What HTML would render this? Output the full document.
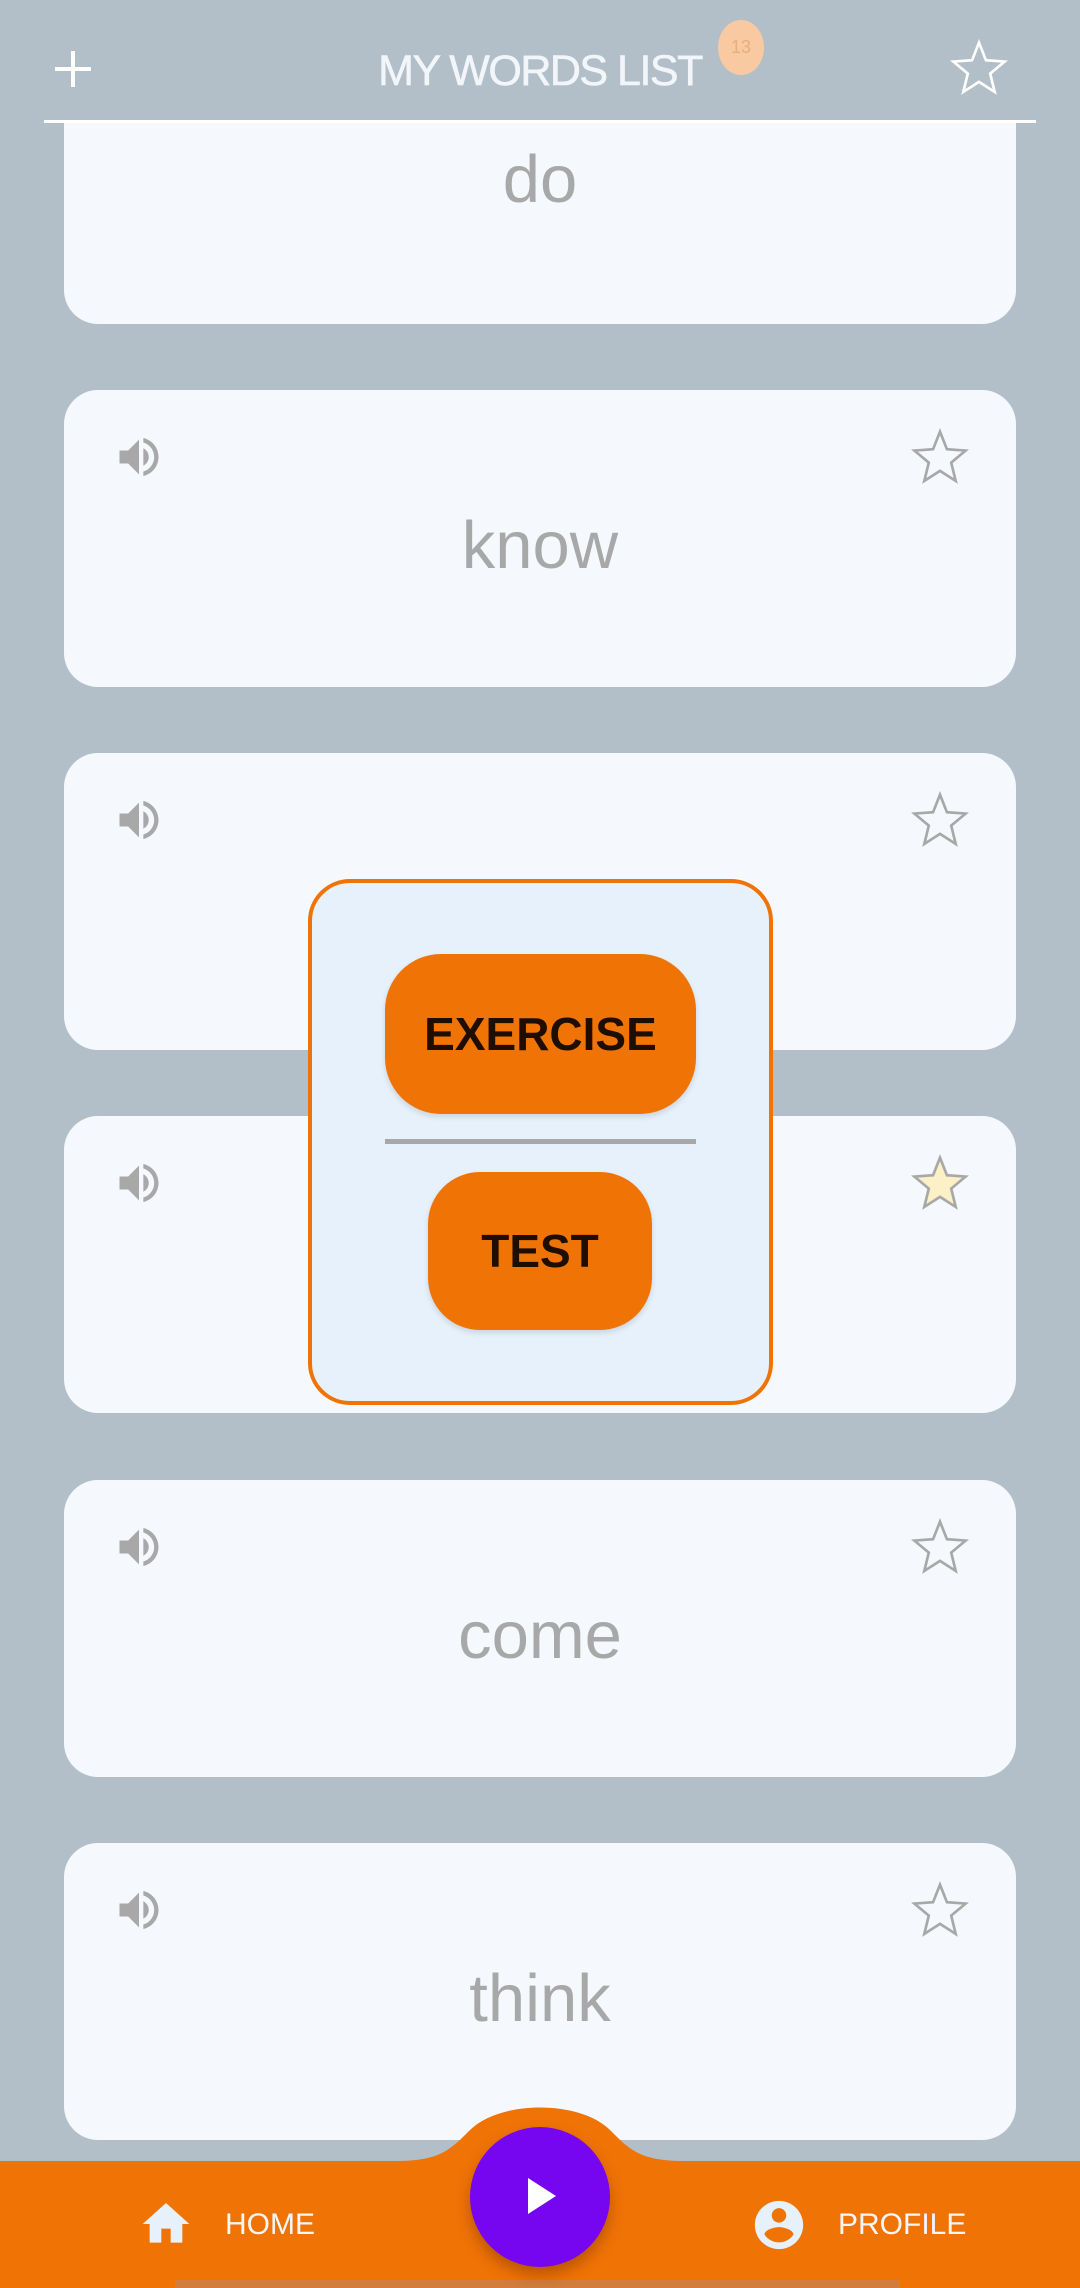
<!DOCTYPE html>
<html><head><meta charset="utf-8">
<style>
*{margin:0;padding:0;box-sizing:border-box}
body{width:1080px;height:2288px;background:#b2bfc8;position:relative;overflow:hidden;font-family:"Liberation Sans",sans-serif}
.card{position:absolute;left:64px;width:952px;height:297px;background:#f5f9fe;border-radius:34px}
.word{position:absolute;left:0;right:0;top:116px;text-align:center;font-size:67px;color:#a8a8a8;line-height:80px}
.spk{position:absolute;left:49px;top:41px;width:52px;height:52px}
.st{position:absolute;left:844px;top:35px;width:64px;height:64px}
.btn{position:absolute;background:#f07306;color:#1e0e00;font-weight:bold;font-size:46px;text-align:center;border-radius:60px;box-shadow:0 3px 6px rgba(0,0,0,.12)}
</style></head><body>
<svg width="0" height="0" style="position:absolute"><defs>
<symbol id="spk" viewBox="0 0 24 24"><path fill="#a8a8a8" d="M3 9v6h4l5 5V4L7 9H3zm13.5 3c0-1.770-1.02-3.29-2.5-4.03v8.05c1.48-.73 2.5-2.25 2.5-4.02zM14 3.23v2.06c2.89.86 5 3.54 5 6.71s-2.110 5.85-5 6.71v2.06c4.01-.91 7-4.49 7-8.77s-2.99-7.86-7-8.77z"/></symbol>
<symbol id="star" viewBox="0 0 24 24"><path d="M12 2.5l2.6 6.6 7 .5-5.4 4.5 1.7 6.9L12 17.2 6.1 21l1.7-6.9L2.4 9.6l7-.5z" stroke-linejoin="miter"/></symbol>
</defs></svg>

<div class="card" style="top:60px;height:264px;border-radius:0 0 34px 34px"><div class="word" style="top:80px">do</div></div>
<div class="card" style="top:390px"><svg class="spk"><use href="#spk"/></svg><svg class="st" fill="none" stroke="#a8a8a8" stroke-width="1"><use href="#star"/></svg><div class="word">know</div></div>
<div class="card" style="top:753px"><svg class="spk"><use href="#spk"/></svg><svg class="st" fill="none" stroke="#a8a8a8" stroke-width="1"><use href="#star"/></svg></div>
<div class="card" style="top:1116px"><svg class="spk"><use href="#spk"/></svg><svg class="st" fill="#fbf0c6" stroke="#a8a8a8" stroke-width="1"><use href="#star"/></svg></div>
<div class="card" style="top:1480px"><svg class="spk"><use href="#spk"/></svg><svg class="st" fill="none" stroke="#a8a8a8" stroke-width="1"><use href="#star"/></svg><div class="word">come</div></div>
<div class="card" style="top:1843px"><svg class="spk"><use href="#spk"/></svg><svg class="st" fill="none" stroke="#a8a8a8" stroke-width="1"><use href="#star"/></svg><div class="word">think</div></div>

<!-- header -->
<div style="position:absolute;left:0;top:0;width:1080px;height:121px;background:#b2bfc8"></div>
<div style="position:absolute;left:44px;top:120px;width:992px;height:3px;background:#fff"></div>
<div style="position:absolute;left:55px;top:67px;width:36px;height:4px;background:#fff"></div>
<div style="position:absolute;left:71px;top:51px;width:4px;height:36px;background:#fff"></div>
<div style="position:absolute;left:0;right:0;top:47px;text-align:center;color:#f2f6fa;font-size:43px;letter-spacing:-1.5px;-webkit-text-stroke:0.6px #f2f6fa">MY WORDS LIST</div>
<div style="position:absolute;left:718px;top:20px;width:46px;height:55px;border-radius:50%;background:#f9caa1;color:#e7ae80;font-size:18px;text-align:center;line-height:55px">13</div>
<svg style="position:absolute;left:947px;top:36px;width:64px;height:64px" fill="none" stroke="#fff" stroke-width="1"><use href="#star"/></svg>

<!-- popup -->
<div style="position:absolute;left:308px;top:879px;width:465px;height:526px;background:#e6f1fc;border:4px solid #f07306;border-radius:42px"></div>
<div class="btn" style="left:385px;top:954px;width:311px;height:160px;line-height:160px;border-radius:56px">EXERCISE</div>
<div style="position:absolute;left:385px;top:1139px;width:311px;height:5px;background:#a8a8a8"></div>
<div class="btn" style="left:428px;top:1172px;width:224px;height:158px;line-height:158px;border-radius:52px">TEST</div>

<!-- bottom nav -->
<svg style="position:absolute;left:0;top:2100px" width="1080" height="188">
<path fill="#f07306" d="M0 61 H395 C440 61 450 50 470 30 C500 0 580 0 610 30 C630 50 640 61 685 61 H1080 V188 H0Z"/>
<rect x="175" y="180" width="725" height="8" fill="#d27d3c"/>
</svg>
<div style="position:absolute;left:470px;top:2127px;width:140px;height:140px;border-radius:50%;background:#7605f0;box-shadow:0 8px 14px rgba(120,50,0,.45)"></div>
<svg style="position:absolute;left:525px;top:2178px" width="34" height="36"><path d="M3 0 L31 18 L3 36Z" fill="#fff"/></svg>
<svg style="position:absolute;left:138px;top:2196px" width="56" height="56" viewBox="0 0 24 24"><path fill="#e6f1fc" d="M10 20v-6h4v6h5v-8h3L12 3 2 12h3v8z"/></svg>
<div style="position:absolute;left:225px;top:2208px;color:#f2f6fa;font-size:30px">HOME</div>
<svg style="position:absolute;left:750px;top:2196px" width="58" height="58" viewBox="0 0 24 24"><path fill="#e6f1fc" d="M12 2C6.480 2 2 6.48 2 12s4.48 10 10 10 10-4.48 10-10S17.52 2 12 2zm0 3c1.66 0 3 1.34 3 3s-1.34 3-3 3-3-1.34-3-3 1.34-3 3-3zm0 14.2c-2.5 0-4.71-1.28-6-3.22.03-1.99 4-3.08 6-3.08 1.99 0 5.970 1.09 6 3.08-1.29 1.94-3.5 3.22-6 3.22z"/></svg>
<div style="position:absolute;left:838px;top:2208px;color:#f2f6fa;font-size:30px">PROFILE</div>
</body></html>
